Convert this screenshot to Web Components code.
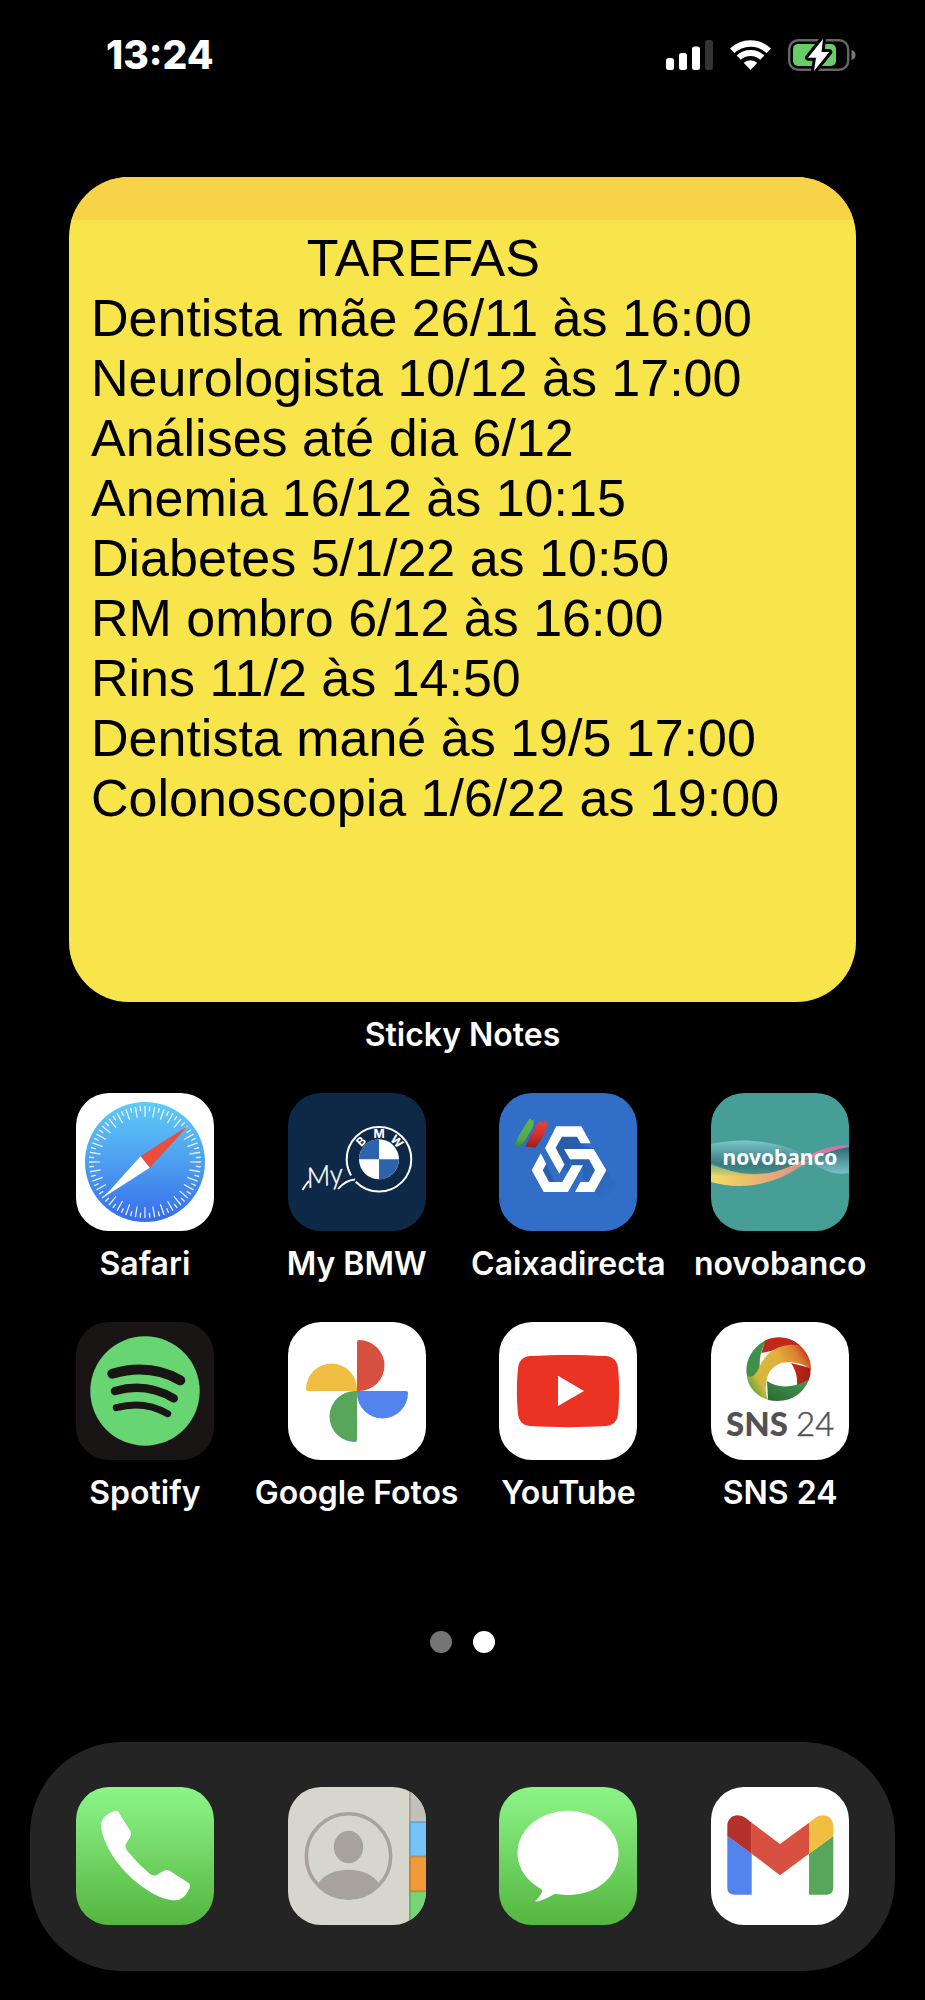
<!DOCTYPE html>
<html lang="pt">
<head>
  <meta charset="utf-8">
  <meta name="viewport" content="width=device-width, initial-scale=1">
  <title>Home</title>
  <style>
    body {
      margin: 0;
      background: #000;
      color: #fff;
      font-family: Inter, "Liberation Sans", sans-serif;
    }
  </style>
</head>
<body>
  <home-screen>
    <status-bar slot="status" time="13:24"></status-bar>

    <sticky-note slot="widget" label="Sticky Notes">
      <h1 slot="title">               TAREFAS</h1>
      <li>Dentista mãe 26/11 às 16:00</li>
      <li>Neurologista 10/12 às 17:00</li>
      <li>Análises até dia 6/12</li>
      <li>Anemia 16/12 às 10:15</li>
      <li>Diabetes 5/1/22 as 10:50</li>
      <li>RM ombro 6/12 às 16:00</li>
      <li>Rins 11/2 às 14:50</li>
      <li>Dentista mané às 19/5 17:00</li>
      <li>Colonoscopia 1/6/22 as 19:00</li>
    </sticky-note>

    <app-icon icon="safari">Safari</app-icon>
    <app-icon icon="bmw">My BMW</app-icon>
    <app-icon icon="caixa">Caixadirecta</app-icon>
    <app-icon icon="novobanco">novobanco</app-icon>
    <app-icon icon="spotify">Spotify</app-icon>
    <app-icon icon="photos">Google Fotos</app-icon>
    <app-icon icon="youtube">YouTube</app-icon>
    <app-icon icon="sns">SNS 24</app-icon>

    <page-dots slot="dots" count="2" current="2"></page-dots>

    <app-dock slot="dock">
      <app-icon icon="phone" name="Telefone"></app-icon>
      <app-icon icon="contacts" name="Contactos"></app-icon>
      <app-icon icon="messages" name="Mensagens"></app-icon>
      <app-icon icon="gmail" name="Gmail"></app-icon>
    </app-dock>
  </home-screen>

  <script>
    // All artwork is drawn on a 138 x 138 canvas
    const ICONS = {
      safari: `
        <defs>
          <linearGradient id="g" x1="0" y1="0" x2="0" y2="1">
            <stop offset="0" stop-color="#5fcbf7"/>
            <stop offset=".5" stop-color="#4d9ff0"/>
            <stop offset="1" stop-color="#366cea"/>
          </linearGradient>
        </defs>
        <rect width="138" height="138" fill="#fff"/>
        <circle cx="69" cy="69" r="60" fill="url(#g)"/>
        <g fill="none" stroke="#fff" stroke-opacity=".85">
          <circle cx="69" cy="69" r="50.5" stroke-width="11" pathLength="36" stroke-dasharray=".15 .85" stroke-dashoffset=".075"/>
          <circle cx="69" cy="69" r="53.5" stroke-width="5" pathLength="36" stroke-dasharray=".15 .85" stroke-dashoffset=".575"/>
        </g>
        <path d="M112.5 32.5 64.5 63.3 73.7 74.7Z" fill="#eb4e3d"/>
        <path d="M27.5 104.5 64.5 63.3 73.7 74.7Z" fill="#fff"/>`,

      bmw: `
        <rect width="138" height="138" fill="#0e2947"/>
        <circle cx="91" cy="66.3" r="32.3" fill="none" stroke="#fff" stroke-width="2" pathLength="360" stroke-dasharray="136 14 210"/>
        <circle cx="91" cy="66.3" r="20" fill="#fff"/>
        <path d="M91 66.3V46.3A20 20 0 0 0 71 66.3ZM91 66.3V86.3A20 20 0 0 0 111 66.3Z" fill="#2c64ac"/>
        <g fill="#fff" font-family="Inter, sans-serif" font-weight="700" font-size="12" text-anchor="middle">
          <text transform="translate(91 66.3) rotate(-45)" y="-21">B</text>
          <text transform="translate(91 66.3)" y="-21">M</text>
          <text transform="translate(91 66.3) rotate(45)" y="-21">W</text>
        </g>
        <text transform="translate(20 95) rotate(-8)" fill="#fff" stroke="#fff" stroke-width=".4" font-family="Lato, sans-serif" font-style="italic" font-weight="300" font-size="28">My</text>
        <path d="M14.500 97C17 93 19 90 21 88M50 96C56 89 61 87 67 86.500" fill="none" stroke="#fff" stroke-width="1.800"/>`,

      caixa: `
        <defs>
          <linearGradient id="r" x1="0" y1="0" x2="0" y2="1">
            <stop offset="0" stop-color="#e8483a"/><stop offset=".5" stop-color="#d8302c"/><stop offset="1" stop-color="#96211f"/>
          </linearGradient>
          <linearGradient id="v" x1="0" y1="0" x2="0" y2="1">
            <stop offset="0" stop-color="#5fb74c"/><stop offset=".7" stop-color="#56ad49"/><stop offset="1" stop-color="#35803a"/>
          </linearGradient>
          <linearGradient id="s" x1="0" y1="0" x2="1" y2="1">
            <stop offset="0" stop-color="#1f4f96"/><stop offset="1" stop-color="#306ec7"/>
          </linearGradient>
        </defs>
        <rect width="138" height="138" fill="#306ec7"/>
        <path d="M63 43.700 78 43.700 82 50.300 92 56H65L71 66.300V79L64 76 56.700 54.700ZM107.300 77.300 118 93 104 108 95.300 99ZM47.300 71 56 89H50L43.700 77.300ZM71 66.300H90L96 77.300 89.700 89 84 86V72.300H73Z" fill="url(#s)" opacity=".7"/>
        <g fill="#fff">
          <path d="M57.300 33.300H82.300L91.700 50.300H81.700L78 43.700H63L56.700 54.700 65.500 71.500 60.300 80.700 46 55.300Z"/>
          <path d="M65 56H94.700L107.300 77.300 95.300 99H76L81.300 89H89.700L96 77.300 90 66.300H71Z"/>
          <path d="M41.700 60.300 47.300 71 43.700 77.300 50 89H63.300L73 72.300H84L69 99H44.700L32.700 77.300Z"/>
        </g>
        <path d="M31 25 33 28 34.500 25.500 34.500 33C30 41 26 48 22 54L16 51.500C20 42 25 33 31 25Z" fill="url(#v)"/>
        <path d="M41 27.500 44 30 46.500 26.500 46.500 30 48.500 28 48 34C44 44 41 49 36.500 54.500L26 53.700C31 45 35 35 41 27.500Z" fill="url(#r)"/>`,

      novobanco: `
        <defs>
          <linearGradient id="a" x1="0" y1="0" x2="0" y2="1">
            <stop offset="0" stop-color="#7cc6cb"/><stop offset=".7" stop-color="#357b80"/><stop offset="1" stop-color="#479084"/>
          </linearGradient>
          <linearGradient id="b" x1="0" y1="0" x2="1" y2="0">
            <stop offset="0" stop-color="#f3dc62"/><stop offset=".25" stop-color="#edc06a"/>
            <stop offset=".55" stop-color="#e39d80"/><stop offset=".85" stop-color="#d277a5"/><stop offset="1" stop-color="#cf6fb0"/>
          </linearGradient>
          <linearGradient id="c" x1="0" y1="0" x2="0" y2="1">
            <stop offset="0" stop-color="#2c6a74"/><stop offset="1" stop-color="#78c3c8"/>
          </linearGradient>
          <linearGradient id="d" x1="0" y1="0" x2="0" y2="1">
            <stop offset="0" stop-color="#479e96"/><stop offset="1" stop-color="#479e96" stop-opacity="0"/>
          </linearGradient>
        </defs>
        <rect width="138" height="138" fill="#479e96"/>
        <path d="M0 72C30 84 60 82 92 66 108 56 122 52 138 52V54C116 58 100 68 84 77 54 95 26 96 0 89Z" fill="url(#b)"/>
        <path d="M0 72C30 84 60 82 84 70L70 76C46 86 20 84 0 82Z" fill="url(#d)" opacity=".8"/>
        <path d="M0 51C30 44 64 47 98 63 80 74 66 81 44 81 24 81 14 76 0 70Z" fill="url(#a)"/>
        <path d="M92 68C108 63 120 57 138 54V80C124 83 110 76 100 70Z" fill="url(#c)"/>
        <text x="69" y="72" fill="#fff" font-family="'Noto Sans', sans-serif" font-weight="700" font-size="21" text-anchor="middle">novobanco</text>`,

      spotify: `
        <rect width="138" height="138" fill="#191514"/>
        <circle cx="69" cy="69" r="54.700" fill="#67d571"/>
        <g fill="none" stroke="#191514" stroke-linecap="round">
          <path d="M36.300 51.700Q74 41 104.300 58.300" stroke-width="10"/>
          <path d="M39 69Q70 60 97.700 76.300" stroke-width="8.500"/>
          <path d="M40.300 85.700Q68 78 91.700 91.700" stroke-width="7"/>
        </g>`,

      photos: `
        <rect width="138" height="138" fill="#fff"/>
        <path d="M69 20Q69 18 71 18A25.500 25.500 0 0 1 71 69H69Z" fill="#d85140"/>
        <path d="M69 20Q69 18 71 18A25.500 25.500 0 0 1 71 69H69Z" fill="#5383ec" transform="rotate(90 69 69)"/>
        <path d="M69 20Q69 18 71 18A25.500 25.500 0 0 1 71 69H69Z" fill="#58a55c" transform="rotate(180 69 69)"/>
        <path d="M69 20Q69 18 71 18A25.500 25.500 0 0 1 71 69H69Z" fill="#f1be42" transform="rotate(270 69 69)"/>`,

      youtube: `
        <rect width="138" height="138" fill="#fff"/>
        <path d="M31 34C55 32.500 83 32.500 107 34 115 35 118 39 119 46 120.500 60 120.500 78 119 92 118 99 115 103 107 104 83 105.500 55 105.500 31 104 23 103 20 99 19 92 17.500 78 17.500 60 19 46 20 39 23 35 31 34Z" fill="#ea3323"/>
        <path d="M59 53.700V84L85 69Z" fill="#fff"/>`,

      sns: `
        <defs>
          <linearGradient id="o" gradientUnits="userSpaceOnUse" x1="40" y1="72" x2="100" y2="36">
            <stop offset="0" stop-color="#4f9f3f"/><stop offset=".2" stop-color="#d3b83c"/>
            <stop offset=".6" stop-color="#e2b03c"/><stop offset=".85" stop-color="#db8030"/><stop offset="1" stop-color="#c33a1f"/>
          </linearGradient>
          <linearGradient id="e" x1="0" y1="0" x2="1" y2="0">
            <stop offset="0" stop-color="#c62a1c"/><stop offset="1" stop-color="#9c1f17"/>
          </linearGradient>
          <linearGradient id="n" x1="0" y1="1" x2="1" y2="0">
            <stop offset="0" stop-color="#2b6a35"/><stop offset="1" stop-color="#449a50"/>
          </linearGradient>
        </defs>
        <rect width="138" height="138" fill="#fff"/>
        <path d="M54 18.500C68 12 82 16 90 24.500L72 26C64 28 56 30 50.300 31Z" fill="#c0281b"/>
        <path d="M55.300 18C42 24 34 38 35.600 52 38 60 46 60 49 48 48 40 49 28 55.300 18Z" fill="#3f9149"/>
        <path d="M80 41 99.700 46Q100 53 97.700 58.500L86 63.500C87 55 84 47 80 41Z" fill="url(#e)"/>
        <path d="M56 59C66 66.500 82 66.500 98 57.500 92 73 78 82 57 78Z" fill="url(#n)"/>
        <path d="M36 54C42 57 46 51 49.300 43 56 30 66 24 78 23 84 22.500 88 23.500 90 24.500 97 31 100 39 100 47.500 92 41 80 39 70 41 60 45 56 52 55.500 60 54 68 55 74 57.500 78 45 74 37 65 36 54Z" fill="url(#o)"/>
        <g fill="#525254" font-family="Lato, sans-serif">
          <text x="15" y="114" font-size="33" font-weight="900">SNS</text>
          <text x="85" y="114" font-size="33" font-weight="300" stroke="#525254" stroke-width=".5">24</text>
        </g>`,

      phone: `
        <defs>
          <linearGradient id="g" x1="0" y1="0" x2="0" y2="1">
            <stop offset="0" stop-color="#8df588"/><stop offset="1" stop-color="#54b640"/>
          </linearGradient>
        </defs>
        <rect width="138" height="138" fill="url(#g)"/>
        <path d="M42.500 25 54.300 44Q56 47 54.300 49.500L50 57Q48.600 60 51 63.500 61 76 73.500 86.500 77 89.500 80.500 88L88 83.800Q91 82 94 84L112 95.500Q115 97.500 113.500 101C110.500 108 106 113 100 113.300 84 114 60 98 45 80 33 66 25 48 25 38 25 31 32 26 38.500 24 41 23.300 42.500 25 42.500 25Z" fill="#fff"/>`,

      contacts: `
        <rect width="138" height="138" fill="#d7d6cd"/>
        <g>
          <rect x="121" width="17" height="35" fill="#c2c0b8"/>
          <rect x="121" y="34.700" width="17" height="35" fill="#75c4f7"/>
          <rect x="121" y="69.300" width="17" height="35" fill="#f19a37"/>
          <rect x="121" y="104" width="17" height="34" fill="#77d672"/>
          <path d="M121 35H138M121 69.500H138M121 104.300H138M122 0V138" stroke="#000" stroke-opacity=".15" stroke-width="2"/>
        </g>
        <circle cx="60.500" cy="69" r="42.200" fill="none" stroke="#a7a29b" stroke-width="3.600"/>
        <ellipse cx="60.500" cy="60" rx="14.700" ry="16.300" fill="#a7a29b"/>
        <path d="M29.500 97C42 78 79 78 91.500 97A43 43 0 0 1 29.500 97Z" fill="#a7a29b"/>`,

      messages: `
        <defs>
          <linearGradient id="g" x1="0" y1="0" x2="0" y2="1">
            <stop offset="0" stop-color="#8df588"/><stop offset="1" stop-color="#54b640"/>
          </linearGradient>
        </defs>
        <rect width="138" height="138" fill="url(#g)"/>
        <ellipse cx="69" cy="66" rx="50.500" ry="42.300" fill="#fff"/>
        <path d="M41 101Q44 103 42.500 106 40 111 36 114 37 115 42 113.500 49 111 55 107.300L62 104Z" fill="#fff"/>`,

      gmail: `
        <rect width="138" height="138" fill="#fff"/>
        <path d="M16.300 49 40.700 66.700V107.700H23.500Q16.300 107.700 16.300 100.500Z" fill="#5383ec"/>
        <path d="M122.300 49 98 66.700V107.700H115Q122.300 107.700 122.300 100.500Z" fill="#58a55c"/>
        <path d="M40.700 35.700 69 57 98 35.700V66.700L69 88.300 40.700 66.700Z" fill="#d85140"/>
        <path d="M40.700 35.700V66.700L16.300 49V39C16.300 29 27 25 35 31.300Z" fill="#b3312a"/>
        <path d="M98 35.700V66.700L122.300 49V39C122.300 29 111.700 25 103.700 31.300Z" fill="#f1be42"/>`
    };

    class HomeScreen extends HTMLElement {
      constructor() {
        super();
        this.attachShadow({ mode: 'open' });
      }

      connectedCallback() {
        this.shadowRoot.innerHTML = `
          <style>
            :host {
              display: flex;
              flex-direction: column;
              min-height: 100vh;
              box-sizing: border-box;
              padding-bottom: 31px;
            }

            .widget {
              padding: 68px 69px 0;
            }

            .apps {
              display: grid;
              grid-template-columns: repeat(4, 1fr);
              row-gap: 38px;
              padding: 38px 39px 0;
            }

            .dots {
              padding: 118px 0 89px;
            }

            .dock {
              margin-top: auto;
              padding: 0 30px;
            }
          </style>

          <slot name="status"></slot>
          <main>
            <div class="widget"><slot name="widget"></slot></div>
            <div class="apps"><slot></slot></div>
            <div class="dots"><slot name="dots"></slot></div>
          </main>
          <div class="dock"><slot name="dock"></slot></div>
        `;
      }
    }

    class StatusBar extends HTMLElement {
      constructor() {
        super();
        this.attachShadow({ mode: 'open' });
      }

      connectedCallback() {
        const time = this.getAttribute('time') || '';

        this.shadowRoot.innerHTML = `
          <style>
            :host {
              display: flex;
              justify-content: space-between;
              align-items: center;
              height: 109px;
              padding: 0 69px 0 106px;
            }

            time {
              font-size: 39px;
              font-weight: 800;
              line-height: 40px;
            }

            .indicators {
              display: flex;
              align-items: center;
              gap: 17px;
            }

            svg {
              display: block;
              overflow: visible;
            }
          </style>

          <time>${time}</time>
          <div class="indicators">
            <svg width="47" height="30" viewBox="0 0 47 30" fill="#fff" aria-label="Rede">
              <rect y="18" width="8" height="12" rx="2.500"/>
              <rect x="13" y="13" width="8" height="17" rx="2.500"/>
              <rect x="26" y="6.500" width="8" height="23.500" rx="2.500"/>
              <rect x="39" width="8" height="30" rx="2.500" fill="#333"/>
            </svg>
            <svg width="41" height="30" viewBox="0 0 41 30" aria-label="Wi-Fi">
              <defs>
                <clipPath id="fan"><path d="M20.500 30-8 0V-10H49V0Z"/></clipPath>
              </defs>
              <g clip-path="url(#fan)" fill="none" stroke="#fff">
                <circle cx="20.500" cy="30" r="26.500" stroke-width="6.500"/>
                <circle cx="20.500" cy="30" r="17" stroke-width="6"/>
                <circle cx="20.500" cy="30" r="9.800" fill="#fff" stroke="none"/>
              </g>
            </svg>
            <svg width="68" height="32" viewBox="0 0 68 32" aria-label="Bateria a carregar">
              <rect x="1.200" y="1.200" width="59" height="29.600" rx="9" fill="none" stroke="#666" stroke-width="2.400"/>
              <path d="M63.500 11Q67.500 12 67.500 16T63.500 21Z" fill="#777"/>
              <rect x="5" y="5" width="43" height="22" rx="5" fill="#67ce67"/>
              <path d="M35 0 20 18.700H28L26 32 41.300 13H33.500Z" fill="#fff" stroke="#000" stroke-width="6" stroke-linejoin="round" paint-order="stroke"/>
            </svg>
          </div>
        `;
      }
    }

    class StickyNote extends HTMLElement {
      constructor() {
        super();
        this.attachShadow({ mode: 'open' });
      }

      connectedCallback() {
        const label = this.getAttribute('label') || '';

        this.shadowRoot.innerHTML = `
          <style>
            :host {
              display: block;
            }

            .note {
              border-radius: 60px;
              overflow: hidden;
              background: #f8e54b;
              color: #000;
              font-family: "Liberation Sans", Arial, sans-serif;
              font-size: 52px;
              line-height: 60px;
            }

            .strip {
              height: 43px;
              background: #f8d347;
            }

            .text {
              padding: 8px 22px 174px;
            }

            ::slotted(h1) {
              margin: 0;
              font-size: inherit;
              font-weight: 400;
              white-space: pre;
            }

            ul {
              margin: 0;
              padding: 0;
              list-style: none;
            }

            .label {
              margin: 13px 0 0;
              font-size: 32px;
              font-weight: 600;
              line-height: 40px;
              text-align: center;
            }
          </style>

          <div class="note">
            <div class="strip"></div>
            <div class="text">
              <slot name="title"></slot>
              <ul><slot></slot></ul>
            </div>
          </div>
          <p class="label">${label}</p>
        `;
      }
    }

    class AppIcon extends HTMLElement {
      constructor() {
        super();
        this.attachShadow({ mode: 'open' });
      }

      connectedCallback() {
        const icon = ICONS[this.getAttribute('icon')] || '';
        const name = this.getAttribute('name');

        this.shadowRoot.innerHTML = `
          <style>
            :host {
              display: flex;
              justify-content: center;
              min-width: 0;
            }

            button {
              display: flex;
              flex-direction: column;
              align-items: center;
              gap: 13px;
              width: 138px;
              padding: 0;
              border: 0;
              background: none;
              color: inherit;
              font: inherit;
              cursor: pointer;
            }

            svg {
              display: block;
              width: 138px;
              height: 138px;
              border-radius: 33px;
            }

            .label {
              font-size: 32px;
              font-weight: 600;
              line-height: 40px;
              white-space: nowrap;
            }
          </style>

          <button type="button" ${name ? `aria-label="${name}"` : ''}>
            <svg viewBox="0 0 138 138" aria-hidden="true">${icon}</svg>
            ${name ? '' : '<span class="label"><slot></slot></span>'}
          </button>
        `;
      }
    }

    class PageDots extends HTMLElement {
      constructor() {
        super();
        this.attachShadow({ mode: 'open' });
      }

      connectedCallback() {
        const count = Number(this.getAttribute('count'));
        const current = Number(this.getAttribute('current'));
        let dots = '';
        for (let i = 1; i <= count; i++) {
          dots += `<span class="${i === current ? 'on' : ''}"></span>`;
        }

        this.shadowRoot.innerHTML = `
          <style>
            :host {
              display: flex;
              justify-content: center;
              gap: 21px;
            }

            span {
              width: 22px;
              height: 22px;
              border-radius: 50%;
              background: #757575;
            }

            .on {
              background: #fff;
            }
          </style>
          ${dots}
        `;
      }
    }

    class AppDock extends HTMLElement {
      constructor() {
        super();
        this.attachShadow({ mode: 'open' });
      }

      connectedCallback() {
        this.shadowRoot.innerHTML = `
          <style>
            :host {
              display: grid;
              grid-template-columns: repeat(4, 1fr);
              padding: 45px 9px 46px;
              border-radius: 92px;
              background: #242424;
            }
          </style>
          <slot></slot>
        `;
      }
    }

    customElements.define('home-screen', HomeScreen);
    customElements.define('status-bar', StatusBar);
    customElements.define('sticky-note', StickyNote);
    customElements.define('app-icon', AppIcon);
    customElements.define('page-dots', PageDots);
    customElements.define('app-dock', AppDock);
  </script>
</body>
</html>
